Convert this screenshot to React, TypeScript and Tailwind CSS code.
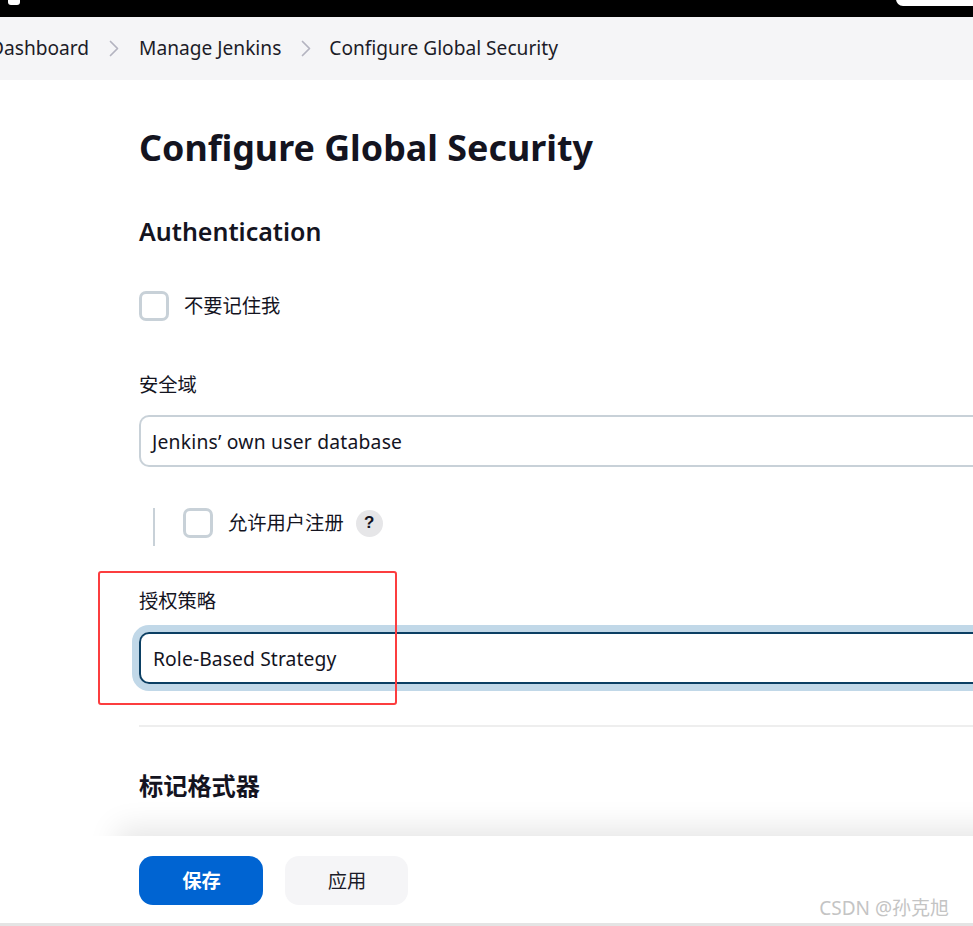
const latin = "font-['Noto_Sans','Noto_Sans_CJK_SC',sans-serif]";

function Chevron() {
  return (
    <svg width="10" height="17" viewBox="0 0 10 17" fill="none" className="shrink-0">
      <path d="M1.5 1.5 8.5 8.5 1.5 15.5" stroke="#b4b4c0" strokeWidth="1.7" strokeLinecap="round" strokeLinejoin="round" />
    </svg>
  );
}

function Checkbox({ label, help }: { label: string; help?: boolean }) {
  return (
    <div className="flex items-center">
      <span className="h-[30px] w-[30px] shrink-0 rounded-[7px] border-[3px] border-[#c8d1d8] bg-white" />
      <span className="ml-[15px] text-[19.3px] leading-[30px]">{label}</span>
      {help && (
        <span className="ml-[12px] flex h-[27px] w-[27px] items-center justify-center rounded-full bg-[#e6e6e8] font-['Liberation_Sans',sans-serif] text-[17px] font-bold">?</span>
      )}
    </div>
  );
}

export default function App() {
  return (
    <div className={`relative h-[926px] w-[973px] overflow-hidden bg-white text-[#14141f] ${latin}`}>
      <header className="relative h-[17px] bg-black">
        <span className="absolute left-[8px] top-[-3px] h-[8px] w-[12px] rounded-[3px] bg-white" />
        <span className="absolute right-0 top-[-8px] h-[14px] w-[77px] rounded-l-[8px] bg-white" />
      </header>

      <nav className="flex h-[63px] items-center bg-[#f5f5f7] text-[19.15px] text-[#1c1c28]">
        <span className="ml-[-10px]">Dashboard</span>
        <span className="ml-[20px]"><Chevron /></span>
        <span className="ml-[20px]">Manage Jenkins</span>
        <span className="ml-[20px]"><Chevron /></span>
        <span className="ml-[18px]">Configure Global Security</span>
      </nav>

      <main className="pl-[139px]">
        <h1 className="mt-[42px] text-[35.85px] font-bold leading-[52px]">Configure Global Security</h1>
        <h2 className="mt-[39px] text-[25px] font-semibold leading-[36px]">Authentication</h2>

        <div className="mt-[42px]"><Checkbox label="不要记住我" /></div>

        <label className="mt-[49px] block text-[19.3px] leading-[30px]">安全域</label>
        <div className="mt-[15px] flex h-[52px] items-center rounded-l-[10px] border-y-2 border-l-2 border-[#c8d1d8] pl-[11px] pt-[2px] text-[19.3px] tracking-[0.22px]">
          Jenkins’ own user database
        </div>

        <div className="mt-[41px] ml-[14px] flex h-[38px] items-start border-l-2 border-[#c8d1d8] pl-[28px]">
          <Checkbox label="允许用户注册" help />
        </div>

        <label className="mt-[40px] block text-[19.3px] leading-[30px]">授权策略</label>
        <div className="mt-[16px] flex h-[52px] items-center rounded-l-[10px] border-y-2 border-l-2 border-[#0b3f63] pl-[12px] pt-[2px] text-[19.3px] tracking-[0.1px] shadow-[0_0_0_7px_#c1d8e8]">
          Role-Based Strategy
        </div>

        <div className="mt-[41px] h-[2px] bg-[#eeeeee]" />

        <h2 className="mt-[42px] text-[24.2px] font-bold leading-[34px]">标记格式器</h2>
      </main>

      <div className="absolute bottom-[3px] left-0 right-0 h-[87px] bg-white pl-[139px] pt-[20px] shadow-[115px_-10px_30px_-2px_rgba(0,0,0,0.1)]">
        <div className="flex gap-[22px]">
          <button className="h-[49px] w-[124px] rounded-[14px] bg-[#0064d2] pl-[1px] pt-[2px] text-[19.3px] font-bold text-white">保存</button>
          <button className="h-[49px] w-[123px] rounded-[14px] bg-[#f5f5f7] pl-[1px] pt-[2px] text-[19.3px] text-[#1c1c28]">应用</button>
        </div>
      </div>
      <div className="absolute bottom-0 left-0 right-0 h-[3px] bg-[#e4e4e4]" />

      <div className="absolute left-[98px] top-[571px] h-[134px] w-[299px] rounded-[3px] border-2 border-[#fc3d3f]" />
      <div className="absolute right-[24px] top-[896px] text-[19px] leading-[24px] text-[#c4c4c4]">CSDN @孙克旭</div>
    </div>
  );
}
